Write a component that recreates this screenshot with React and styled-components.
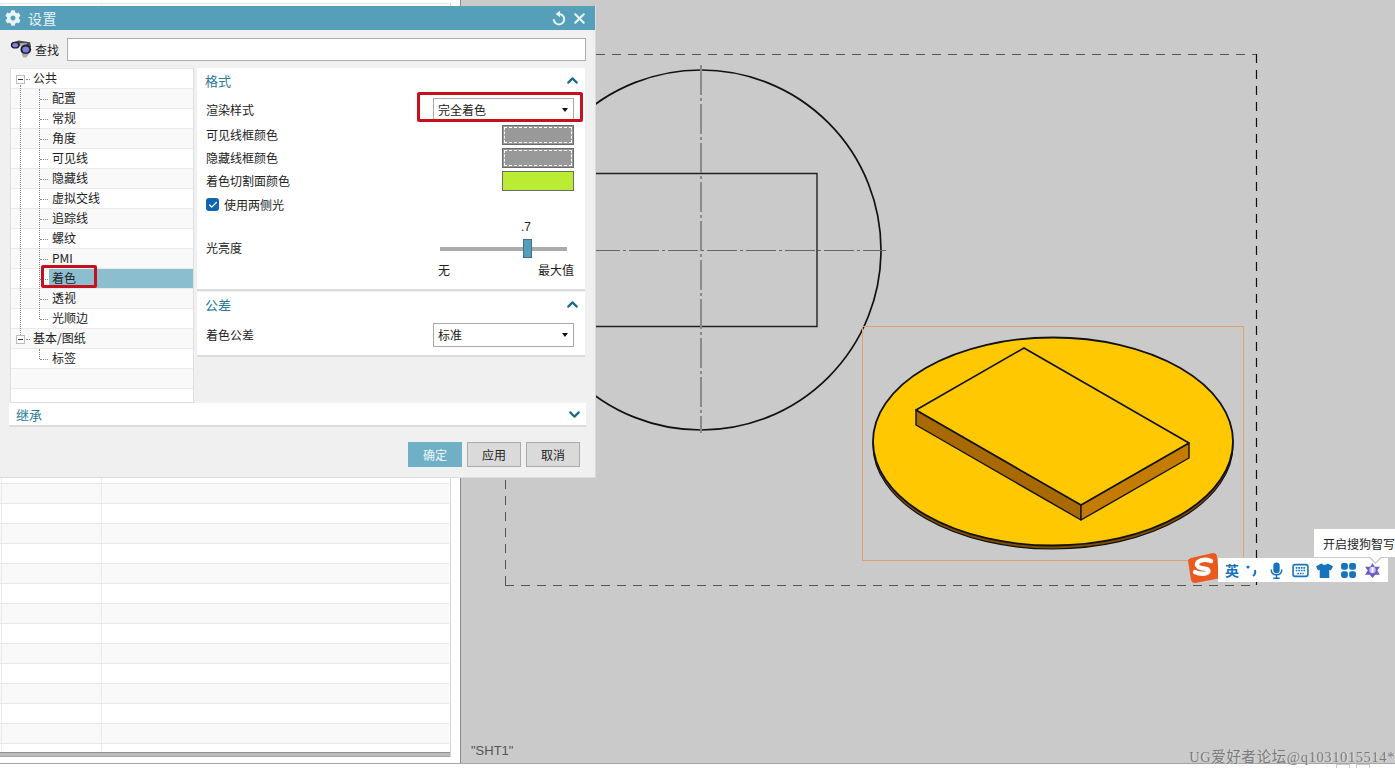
import styled, { createGlobalStyle } from "styled-components";
import { FaCog } from "react-icons/fa";
import { ChevronUp, ChevronDown, X, Check } from "lucide-react";

const GlobalStyle = createGlobalStyle`
  html, body {
    margin: 0;
    background: #fff;
    overflow: hidden;
  }
  * {
    box-sizing: border-box;
  }
`;

const FONT = `"Noto Sans CJK SC", "Noto Sans", sans-serif`;

const Page = styled.div`
  position: relative;
  width: 1395px;
  height: 769px;
  overflow: hidden;
  background: #fff;
  font-family: ${FONT};
  font-size: 12px;
  color: #222;
`;

const Workspace = styled.div`
  display: flex;
  height: 764px;
  border-bottom: 1px solid #a5a5a5;
`;

const LeftPane = styled.div`
  width: 460px;
  flex: none;
  padding: 3px 9px 0 0;
  background: #fff;
  display: flex;
  flex-direction: column;
`;

const GridBox = styled.div`
  border-right: 1px solid #d4d4d4;
  height: 754px;
  display: flex;
  flex-direction: column;
`;

const GridRow = styled.div`
  height: ${(p) => (p.$short ? 8 : 20)}px;
  flex: none;
  display: grid;
  grid-template-columns: 2px 100px 1fr;
  border-top: 1px solid #e8e8e8;
  margin-right: 1px;
  background: ${(p) => (p.$shaded ? "#f9f9f9" : "#fff")};
`;

const GridCell = styled.div`
  border-right: 1px solid #ececec;

  &:last-child {
    border-right: 0;
  }
`;

const GridScroll = styled.div`
  height: 5px;
  margin-top: auto;
  background: #bcbcbc;
  border-top: 1px solid #8f8f8f;
  border-bottom: 1px solid #a5a5a5;
`;

const Canvas = styled.div`
  position: relative;
  flex: 1;
  background: #cacaca;
  border-left: 1px solid #8c8c8c;
`;

const Drawing = styled.svg`
  display: block;
  width: 934px;
  height: 763px;
`;

const SheetName = styled.div`
  position: absolute;
  left: 10px;
  top: 743px;
  font-family: "Liberation Sans", sans-serif;
  font-size: 13px;
  line-height: 15px;
  color: #555;
`;

const Watermark = styled.div`
  position: absolute;
  right: 0;
  top: 749px;
  white-space: nowrap;
  font-family: "Liberation Serif", "Noto Sans CJK SC", serif;
  font-size: 14.5px;
  line-height: 16px;
  letter-spacing: 0.6px;
  color: #7a7a7a;
  text-shadow: 1px 0 0 #e2e2e2;
`;

const CornerBoxes = styled.div`
  display: flex;
  justify-content: flex-end;
  gap: 6px;
  padding-right: 25px;
`;

const CornerBox = styled.div`
  width: 14px;
  height: 4px;
  border: 1px solid #ccc;
  border-bottom: 0;
`;

/* dialog */
const Dialog = styled.div`
  position: absolute;
  left: 0;
  top: 6px;
  width: 596px;
  height: 472px;
  background: #f0f0f0;
  border-right: 1px solid #dcdcdc;
  border-bottom: 1px solid #dcdcdc;
  display: flex;
  flex-direction: column;
`;

const TitleBar = styled.div`
  height: 24px;
  flex: none;
  background: #559fba;
  color: #eaf4f7;
  display: flex;
  align-items: center;
  padding: 0 7px 0 5px;
  font-size: 14px;
`;

const TitleText = styled.span`
  margin-left: 7px;
  flex: 1;
  letter-spacing: 0.5px;
`;

const TitleButtons = styled.div`
  display: flex;
  align-items: center;
  gap: 4px;
`;

const SearchRow = styled.div`
  display: flex;
  align-items: center;
  height: 22px;
  margin: 8px 9px 0 10px;
`;

const SearchLabel = styled.span`
  margin-left: 3px;
  width: 32px;
  flex: none;
`;

const SearchInput = styled.div`
  flex: 1;
  height: 23px;
  background: #fff;
  border: 1px solid #adadad;
`;

const Columns = styled.div`
  display: flex;
  margin: 8px 10px 0 10px;
  height: 335px;
  gap: 3px;
`;

const Tree = styled.div`
  width: 184px;
  flex: none;
  background: #fff;
  border: 1px solid #dedede;
  border-top-color: #e6e6e6;
  position: relative;
  overflow: hidden;
`;

const TreeRow = styled.div`
  position: relative;
  height: 20px;
  display: flex;
  align-items: center;
  border-bottom: 1px solid #ebebeb;
  background: ${(p) => (p.$shaded ? "#f9f9f9" : "#fff")};
  padding-left: ${(p) => (p.$top ? 22 : 41)}px;
  padding-bottom: 2px;
  line-height: 18px;
`;

const TreeLabel = styled.span`
  position: relative;
  z-index: 1;
`;

const SelectedFill = styled.div`
  position: absolute;
  left: 38px;
  right: 0;
  top: 0;
  bottom: 0;
  background: #8bbfd0;
`;

const Expander = styled.div`
  position: absolute;
  left: 5px;
  top: 6px;
  width: 9px;
  height: 9px;
  background: #fff;
  border: 1px solid #bdbdbd;
  z-index: 1;

  &::after {
    content: "";
    position: absolute;
    left: 1px;
    top: 3px;
    width: 5px;
    height: 1px;
    background: #333;
  }
`;

const Dots = styled.div`
  position: absolute;
  left: ${(p) => p.$left}px;
  top: ${(p) => p.$top}px;
  width: ${(p) => p.$w || 0}px;
  height: ${(p) => p.$h || 0}px;
  border-left: ${(p) => (p.$h ? "1px dotted #888" : "0")};
  border-top: ${(p) => (p.$w ? "1px dotted #888" : "0")};
`;

const RedBox = styled.div`
  position: absolute;
  border: 3px solid #c8101c;
  border-radius: 2px;
  pointer-events: none;
  z-index: 3;
`;

const TreeMark = styled(RedBox)`
  left: 30px;
  top: -4px;
  width: 56px;
  height: 23px;
`;

const Panels = styled.div`
  flex: 1;
  display: flex;
  flex-direction: column;
  gap: 1px;
`;

const Section = styled.div`
  background: #fff;
  border-bottom: 2px solid #dcdcdc;
  padding: 0 11px 0 9px;
  height: ${(p) => p.$h}px;
  flex: none;
  position: relative;
`;

const SectionHead = styled.div`
  display: flex;
  align-items: center;
  justify-content: space-between;
  height: 26px;
  padding-bottom: 2px;
  margin: 0 -7px 0 -1px;
  color: #2a7b97;
  font-size: 13px;
`;

const Row = styled.div`
  display: flex;
  align-items: center;
  justify-content: space-between;
  height: ${(p) => p.$h || 23}px;
  position: relative;
`;

const RowLabel = styled.span`
  margin-top: ${(p) => p.$drop || 0}px;
`;

const Select = styled.div`
  width: 141px;
  height: 24px;
  margin-top: 3px;
  padding: 0 5px 2px 4px;
  background: #fff;
  border: 1px solid #a9a9a9;
  display: flex;
  align-items: center;
  justify-content: space-between;
`;

const Caret = styled.span`
  width: 0;
  height: 0;
  margin-top: 2px;
  border-left: 3.5px solid transparent;
  border-right: 3.5px solid transparent;
  border-top: 4px solid #111;
`;

const SelectMark = styled(RedBox)`
  right: -9px;
  top: -2px;
  width: 166px;
  height: 30px;
`;

const Swatch = styled.div`
  width: 72px;
  height: 20px;
  background: ${(p) => p.$color};
  border: 1px solid #6b6b6b;
  position: relative;

  ${(p) =>
    p.$dashed &&
    `&::after {
      content: "";
      position: absolute;
      inset: 1px;
      border: 1px dashed #fff;
    }`}
`;

const CheckRow = styled.div`
  display: flex;
  align-items: center;
  gap: 5px;
  height: 23px;
  margin-top: 1px;
`;

const CheckBox = styled.div`
  width: 13px;
  height: 13px;
  border-radius: 3px;
  background: #0e66b0;
  display: flex;
  align-items: center;
  justify-content: center;
`;

const SliderBlock = styled.div`
  position: relative;
  height: 68px;
  padding-bottom: 6px;
  display: flex;
  align-items: center;
`;

const SliderValue = styled.div`
  position: absolute;
  left: 315px;
  top: 4px;
  font-family: "Liberation Sans", sans-serif;
  font-size: 12px;
`;

const SliderTrack = styled.div`
  position: absolute;
  left: 234px;
  top: 31px;
  width: 127px;
  height: 4px;
  background: #ababab;
`;

const SliderThumb = styled.div`
  position: absolute;
  left: 83px;
  top: -8px;
  width: 9px;
  height: 19px;
  background: #559fba;
  border: 1px solid #456e80;
`;

const SliderEnds = styled.div`
  position: absolute;
  left: 232px;
  width: 136px;
  top: 45px;
  display: flex;
  justify-content: space-between;
`;

const FillGap = styled.div`
  flex: 1;
`;

const Inherit = styled.div`
  height: 24px;
  margin: 0 9px 0 9px;
  background: #fff;
  border-bottom: 2px solid #dcdcdc;
  display: flex;
  align-items: center;
  justify-content: space-between;
  padding: 0 3px 0 7px;
  color: #2a7b97;
  font-size: 13px;
`;

const Footer = styled.div`
  display: flex;
  justify-content: flex-end;
  gap: 5px;
  padding: 15px 15px 0 0;
`;

const Btn = styled.div`
  width: 54px;
  height: 25px;
  display: flex;
  align-items: center;
  justify-content: center;
  background: ${(p) => (p.$primary ? "#6fb0c6" : "#dadada")};
  color: ${(p) => (p.$primary ? "#eef7fa" : "#222")};
  border: 1px solid ${(p) => (p.$primary ? "#6fb0c6" : "#ababab")};
`;

/* input method bar */
const ImeBar = styled.div`
  position: absolute;
  left: 1218px;
  top: 558px;
  width: 170px;
  height: 24px;
  background: #fff;
  display: flex;
  align-items: center;
  padding-left: 7px;
`;

const ImeLang = styled.span`
  width: 30px;
  color: #1673bd;
  font-size: 14px;
  font-weight: 700;
`;

const ImeIcon = styled.svg`
  width: 17px;
  height: 17px;
  flex: none;
  margin-right: 7px;
  display: block;
`;

const ImeLogo = styled.svg`
  position: absolute;
  left: 1187px;
  top: 552px;
  width: 33px;
  height: 32px;
`;

const ImeTip = styled.div`
  position: absolute;
  left: 1314px;
  top: 529px;
  width: 90px;
  height: 28px;
  background: #fff;
  padding-left: 9px;
  display: flex;
  align-items: center;
  white-space: nowrap;

  &::after {
    content: "";
    position: absolute;
    left: 57px;
    top: 24px;
    width: 8px;
    height: 8px;
    background: #fff;
    border-right: 1px solid #b5b5b5;
    border-bottom: 1px solid #b5b5b5;
    transform: rotate(45deg);
  }
`;

const TREE = [
  ["公共", true, false],
  ["配置", false, true],
  ["常规", false, false],
  ["角度", false, true],
  ["可见线", false, false],
  ["隐藏线", false, true],
  ["虚拟交线", false, false],
  ["追踪线", false, true],
  ["螺纹", false, false],
  ["PMI", false, true],
  ["着色", false, false],
  ["透视", false, true],
  ["光顺边", false, false],
  ["基本/图纸", true, true],
  ["标签", false, false],
  ["", false, true],
  ["", false, false],
];

function Binoculars() {
  return (
    <svg width="22" height="20" viewBox="0 0 23 20">
      <path d="M1 4 L9 1 L21 3 L22 8 L16 9 L9 6 L5 8 Z" fill="#4a4a4e" />
      <path d="M10 4 L18 4 L16 8 L11 7 Z" fill="#b9b9bd" />
      <ellipse cx="5.5" cy="6" rx="4.6" ry="3.6" fill="#1d1d2c" />
      <ellipse cx="5.5" cy="6" rx="3" ry="2.2" fill="#7f83d6" />
      <ellipse cx="16.5" cy="10.5" rx="5.6" ry="5.2" fill="#1e1e2e" />
      <ellipse cx="16.5" cy="10.5" rx="3.6" ry="3.2" fill="#7d80d4" />
      <path d="M12 15 L20 15 L17 19 L14 19 Z" fill="#a9a9a9" />
    </svg>
  );
}

function RefreshIcon() {
  return (
    <svg width="16" height="16" viewBox="0 0 16 16">
      <path d="M8 4 A5.2 5.2 0 1 1 2.8 9.2" fill="none" stroke="#eaf4f7" strokeWidth="2" />
      <path d="M4.6 4 L9 0.8 V7.2 Z" fill="#eaf4f7" />
    </svg>
  );
}

function PartDrawing() {
  return (
    <Drawing viewBox="461 0 934 763">
      <path d="M596 54.5 H1257 M505 585.5 H1257 M505.5 585 V477" fill="none" stroke="#555" strokeDasharray="9 7" />
      <path d="M1256.5 54 V585" fill="none" stroke="#111" strokeWidth="1.2" strokeDasharray="9 7" />
      <circle cx="701" cy="250" r="180" fill="none" stroke="#111" strokeWidth="1.7" />
      <path d="M590 173.5 H817 V326.5 H590" fill="none" stroke="#222" strokeWidth="1.4" />
      <path d="M701 65 V433" fill="none" stroke="#8a8a8a" strokeWidth="2" strokeDasharray="30 3 3 3" />
      <path d="M590 250.5 H886" fill="none" stroke="#666" strokeDasharray="30 3 3 3" />
      <rect x="862.5" y="326.5" width="381" height="234" fill="none" stroke="#e0a26a" />
      <ellipse cx="1053" cy="445" rx="180" ry="104" fill="#7c4d08" stroke="#111" strokeWidth="1.2" />
      <ellipse cx="1053" cy="441.5" rx="180" ry="104" fill="#ffc800" stroke="#111" strokeWidth="1.8" />
      <path d="M916 410 L1081 505 V520 L916 425 Z" fill="#a86a00" stroke="#111" strokeWidth="1.4" strokeLinejoin="round" />
      <path d="M1081 505 L1189 443 V458 L1081 520 Z" fill="#c47c00" stroke="#111" strokeWidth="1.4" strokeLinejoin="round" />
      <path d="M1024 348 L1189 443 L1081 505 L916 410 Z" fill="#ffc800" stroke="#111" strokeWidth="1.6" strokeLinejoin="round" />
    </Drawing>
  );
}

function ImeTools() {
  return (
    <>
      <ImeLogo viewBox="0 0 33 32">
        <path d="M4 6 L26 1 Q29 1 30 4 L32 24 Q32 27 29 27 L8 31 Q5 31 4 28 L1 9 Q1 7 4 6 Z" fill="#ea5a1e" />
        <path d="M24 9 Q16 6 11 10 Q8 14 14 16 L20 17 Q23 19 20 21 Q14 23 8 20" fill="none" stroke="#fff" strokeWidth="4.4" strokeLinecap="round" />
      </ImeLogo>
      <ImeBar>
        <ImeLang>英</ImeLang>
        <ImeIcon viewBox="0 0 17 17">
          <circle cx="4" cy="5" r="1.6" fill="#1673bd" />
          <path d="M11 8 Q12 12 9 14" fill="none" stroke="#1673bd" strokeWidth="2" />
        </ImeIcon>
        <ImeIcon viewBox="0 0 16 16">
          <rect x="5" y="0.5" width="6" height="10" rx="3" fill="#1673bd" />
          <path d="M3 7 Q3 12 8 12 Q13 12 13 7 M8 12 V15 M5 15.2 H11" fill="none" stroke="#1673bd" strokeWidth="1.4" />
        </ImeIcon>
        <ImeIcon viewBox="0 0 16 16">
          <rect x="1" y="2.5" width="14" height="11" rx="2" fill="none" stroke="#1673bd" strokeWidth="1.5" />
          <path d="M3.5 5.5 H12.5 M3.5 8 H12.5 M5 10.8 H11" stroke="#1673bd" strokeWidth="1.5" strokeDasharray="1.6 0.8" />
        </ImeIcon>
        <ImeIcon viewBox="0 0 16 16">
          <path d="M5 1.5 Q8 4 11 1.5 L16 4 L14 8 L12.5 7.3 V15 H3.5 V7.3 L2 8 L0 4 Z" fill="#1673bd" />
        </ImeIcon>
        <ImeIcon viewBox="0 0 16 16">
          <rect x="1" y="1" width="6.4" height="6.4" rx="2" fill="#1673bd" />
          <rect x="8.6" y="1" width="6.4" height="6.4" rx="2" fill="#1673bd" />
          <rect x="1" y="8.6" width="6.4" height="6.4" rx="2" fill="#1673bd" />
          <rect x="8.6" y="8.6" width="6.4" height="6.4" rx="2" fill="#1673bd" />
        </ImeIcon>
        <ImeIcon viewBox="0 0 16 16">
          <path d="M8 1 L10 4.5 H15 L12.5 8 L15 12 H10.5 L8 15 L5.5 12 H1 L3.5 8 L1 4.5 H6 Z" fill="#6d5bc4" />
          <circle cx="8" cy="7.5" r="3" fill="#c9c2f2" />
          <path d="M8 5 V10" stroke="#fff" strokeWidth="1.6" />
        </ImeIcon>
      </ImeBar>
      <ImeTip>开启搜狗智写</ImeTip>
    </>
  );
}

function SettingsDialog() {
  return (
    <Dialog>
      <TitleBar>
        <FaCog size={16} color="#eaf4f7" />
        <TitleText>设置</TitleText>
        <TitleButtons>
          <RefreshIcon />
          <X size={17} strokeWidth={3} color="#eaf4f7" />
        </TitleButtons>
      </TitleBar>
      <SearchRow>
        <Binoculars />
        <SearchLabel>查找</SearchLabel>
        <SearchInput />
      </SearchRow>
      <Columns>
        <Tree>
          {TREE.map(([label, top, shaded], i) => (
            <TreeRow key={i} $top={top} $shaded={shaded}>
              {label === "着色" && <SelectedFill />}
              {top && <Expander />}
              {top && <Dots $left={15} $top={10} $w={4} />}
              {!top && label && <Dots $left={29} $top={10} $w={8} />}
              <TreeLabel>{label}</TreeLabel>
              {label === "着色" && <TreeMark />}
            </TreeRow>
          ))}
          <Dots $left={9} $top={16} $h={254} />
          <Dots $left={28} $top={20} $h={230} />
          <Dots $left={28} $top={280} $h={10} />
        </Tree>
        <Panels>
          <Section $h={223}>
            <SectionHead>
              格式
              <ChevronUp size={17} strokeWidth={3} color="#1f6a85" />
            </SectionHead>
            <Row $h={29}>
              <RowLabel $drop={1}>渲染样式</RowLabel>
              <Select>
                完全着色
                <Caret />
              </Select>
              <SelectMark />
            </Row>
            <Row>
              <span>可见线框颜色</span>
              <Swatch $color="#999" $dashed />
            </Row>
            <Row>
              <span>隐藏线框颜色</span>
              <Swatch $color="#999" $dashed />
            </Row>
            <Row>
              <span>着色切割面颜色</span>
              <Swatch $color="#b9ec33" />
            </Row>
            <CheckRow>
              <CheckBox>
                <Check size={10} strokeWidth={3} color="#fff" />
              </CheckBox>
              使用两侧光
            </CheckRow>
            <SliderBlock>
              光亮度
              <SliderValue>.7</SliderValue>
              <SliderTrack>
                <SliderThumb />
              </SliderTrack>
              <SliderEnds>
                <span>无</span>
                <span>最大值</span>
              </SliderEnds>
            </SliderBlock>
          </Section>
          <Section $h={65}>
            <SectionHead>
              公差
              <ChevronUp size={17} strokeWidth={3} color="#1f6a85" />
            </SectionHead>
            <Row $h={31}>
              <RowLabel $drop={1}>着色公差</RowLabel>
              <Select>
                标准
                <Caret />
              </Select>
            </Row>
          </Section>
          <FillGap />
        </Panels>
      </Columns>
      <Inherit>
        继承
        <ChevronDown size={17} strokeWidth={3} color="#1f6a85" />
      </Inherit>
      <Footer>
        <Btn $primary>确定</Btn>
        <Btn>应用</Btn>
        <Btn>取消</Btn>
      </Footer>
    </Dialog>
  );
}

export default function App() {
  const rows = Array.from({ length: 37 }, (_, i) => i);
  return (
    <Page>
      <GlobalStyle />
      <Workspace>
        <LeftPane>
          <GridBox>
            {rows.map((i) => (
              <GridRow key={i} $shaded={i % 2 === 0}>
                <GridCell />
                <GridCell />
                <GridCell />
              </GridRow>
            ))}
            <GridRow $short>
              <GridCell />
              <GridCell />
              <GridCell />
            </GridRow>
            <GridScroll />
          </GridBox>
        </LeftPane>
        <Canvas>
          <PartDrawing />
          <SheetName>"SHT1"</SheetName>
          <Watermark>UG爱好者论坛@q1031015514*</Watermark>
        </Canvas>
      </Workspace>
      <CornerBoxes>
        <CornerBox />
        <CornerBox />
      </CornerBoxes>
      <SettingsDialog />
      <ImeTools />
    </Page>
  );
}
